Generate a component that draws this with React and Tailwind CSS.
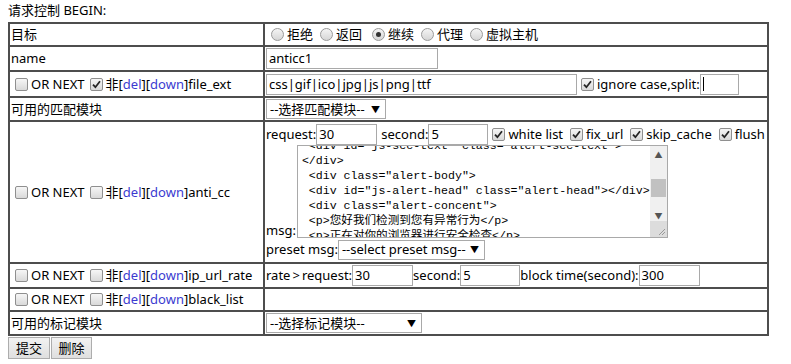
import React from "react";

const Check = ({ checked }) => (
  <span className="inline-flex items-center justify-center w-[13px] h-[13px] shrink-0 border border-[#8f8f8f] rounded-[2px] bg-linear-to-b from-[#f6f6f6] to-[#d9d9d9] ml-[4px] mr-[3px]">
    {checked && (
      <svg width="9" height="9" viewBox="0 0 9 9">
        <path d="M1 4.6 L3.4 7.2 L8 1.2" fill="none" stroke="#262626" strokeWidth="1.8" />
      </svg>
    )}
  </span>
);

const Radio = ({ checked }) => (
  <span className="inline-flex items-center justify-center w-[13px] h-[13px] shrink-0 border border-[#9a9a9a] rounded-full bg-linear-to-b from-[#f4f4f4] to-[#d6d6d6] ml-[5px] mr-[3px]">
    {checked && <span className="w-[5px] h-[5px] rounded-full bg-[#333]" />}
  </span>
);

const Input = ({ w, value, caret }) => (
  <span className={`inline-flex items-center h-[21px] border border-[#a9a9a9] bg-white px-[2px] shrink-0 ${w}`}>
    {value}
    {caret && <span className="w-px h-[14px] bg-black" />}
  </span>
);

const Select = ({ w, label }) => (
  <span className={`inline-flex items-center justify-between h-[20px] border border-[#a9a9a9] bg-white pl-[3px] pr-[5px] shrink-0 ${w}`}>
    <span>{label}</span>
    <span className="text-[9px]">▼</span>
  </span>
);

const Rule = ({ name, checked }) => (
  <div className="flex items-center whitespace-nowrap">
    <Check />
    <span className="mr-[1px]">OR NEXT</span>
    <Check checked={checked} />
    <span>非[<span className="text-[#3b3bd0]">del</span>][<span className="text-[#3b3bd0]">down</span>]{name}</span>
  </div>
);

const Cell = ({ h, children, className = "" }) => (
  <td className={`border border-[#4d4d4d] p-[1px] align-middle ${h} ${className}`}>{children}</td>
);

const msgLines = [
  ' <div id="js-sec-text" class="alert-sec-text">',
  "</div>",
  ' <div class="alert-body">',
  ' <div id="js-alert-head" class="alert-head"></div>',
  ' <div class="alert-concent">',
  " <p>您好我们检测到您有异常行为</p>",
  " <p>正在对你的浏览器进行安全检查</p>",
];

export default function App() {
  return (
    <div className="w-[791px] h-[364px] bg-white text-black text-[13px] leading-[17px] font-['Noto_Sans','Noto_Sans_CJK_SC',sans-serif] overflow-hidden">
      <div className="pl-2 pt-[2px] h-[22px]">请求控制 BEGIN:</div>
      <table className="ml-2 w-[761px] table-fixed border-separate border-spacing-0 border border-[#4d4d4d]">
        <tbody>
          <tr>
            <Cell h="h-[23px]" className="w-[255px]">目标</Cell>
            <Cell h="h-[23px]">
              <div className="flex items-center whitespace-nowrap">
                <Radio />
                <span className="mr-[2px]">拒绝</span>
                <Radio />
                <span className="mr-[5px]">返回</span>
                <Radio checked />
                <span className="mr-[2px]">继续</span>
                <Radio />
                <span className="mr-[2px]">代理</span>
                <Radio />
                <span>虚拟主机</span>
              </div>
            </Cell>
          </tr>
          <tr>
            <Cell h="h-[25px]">name</Cell>
            <Cell h="h-[25px]">
              <div className="flex items-center">
                <Input w="w-[172px]" value="anticc1" />
              </div>
            </Cell>
          </tr>
          <tr>
            <Cell h="h-[26px]">
              <Rule name="file_ext" checked />
            </Cell>
            <Cell h="h-[26px]">
              <div className="flex items-center whitespace-nowrap">
                <Input w="w-[311px]" value="css|gif|ico|jpg|js|png|ttf" />
                <Check checked />
                <span>ignore case,split:</span>
                <Input w="w-[39px]" caret />
              </div>
            </Cell>
          </tr>
          <tr>
            <Cell h="h-[23px]">可用的匹配模块</Cell>
            <Cell h="h-[23px]">
              <div className="flex items-center">
                <Select w="w-[120px]" label="--选择匹配模块--" />
              </div>
            </Cell>
          </tr>
          <tr>
            <Cell h="h-[142px]">
              <Rule name="anti_cc" />
            </Cell>
            <Cell h="h-[142px]">
              <div className="flex flex-col">
                <div className="flex items-center whitespace-nowrap h-[21px]">
                  <span>request:</span>
                  <Input w="w-[61px]" value="30" />
                  <span className="ml-[4px]">second:</span>
                  <Input w="w-[60px]" value="5" />
                  <Check checked />
                  <span className="mr-[3px]">white list</span>
                  <Check checked />
                  <span className="mr-[3px]">fix_url</span>
                  <Check checked />
                  <span className="mr-[3px]">skip_cache</span>
                  <Check checked />
                  <span>flush</span>
                </div>
                <div className="flex items-end">
                  <span className="leading-[15px]">msg:</span>
                  <div className="flex w-[371px] h-[93px] border border-[#a9a9a9] bg-white ml-[1px]">
                    <div className="flex-1 overflow-hidden pl-[4px] font-['Liberation_Mono','Noto_Sans_CJK_SC',monospace] text-[11.6px] leading-[15px] whitespace-pre">
                      <div className="-mt-[8px]">
                        {msgLines.map((l, i) => (
                          <div key={i}>{l}</div>
                        ))}
                      </div>
                    </div>
                    <div className="w-[17px] flex flex-col bg-[#f0f0f0] text-[#555] text-[8px] leading-none">
                      <div className="h-[17px] flex items-center justify-center">▲</div>
                      <div className="h-[48px] flex flex-col">
                        <div className="h-[16px]" />
                        <div className="mx-[1px] h-[18px] bg-[#c1c1c1]" />
                      </div>
                      <div className="h-[10px] flex items-center justify-center">▼</div>
                      <div className="flex-1 bg-[#dcdcdc] flex items-end justify-end p-[1px]">
                        <svg width="8" height="8" viewBox="0 0 8 8">
                          <path d="M7 1 L1 7 M7 4 L4 7" stroke="#999" strokeWidth="1" />
                        </svg>
                      </div>
                    </div>
                  </div>
                </div>
                <div className="flex items-center whitespace-nowrap h-[21px] mt-[1px]">
                  <span>preset msg:</span>
                  <Select w="w-[147px]" label="--select preset msg--" />
                </div>
              </div>
            </Cell>
          </tr>
          <tr>
            <Cell h="h-[24px]">
              <Rule name="ip_url_rate" />
            </Cell>
            <Cell h="h-[24px]">
              <div className="flex items-center whitespace-nowrap">
                <span>rate<span className="mx-[2px]">&gt;</span>request:</span>
                <Input w="w-[61px]" value="30" />
                <span>second:</span>
                <Input w="w-[60px]" value="5" />
                <span>block time(second):</span>
                <Input w="w-[61px]" value="300" />
              </div>
            </Cell>
          </tr>
          <tr>
            <Cell h="h-[23px]">
              <Rule name="black_list" />
            </Cell>
            <Cell h="h-[23px]" />
          </tr>
          <tr>
            <Cell h="h-[24px]">可用的标记模块</Cell>
            <Cell h="h-[24px]">
              <div className="flex items-center">
                <Select w="w-[156px]" label="--选择标记模块--" />
              </div>
            </Cell>
          </tr>
        </tbody>
      </table>
      <div className="flex pl-2 pt-[1px] gap-[1px]">
        <button className="h-[22px] w-[42px] border border-[#adadad] bg-linear-to-b from-[#f2f2f2] to-[#dfdfdf]">提交</button>
        <button className="h-[22px] w-[41px] border border-[#adadad] bg-linear-to-b from-[#f2f2f2] to-[#dfdfdf]">删除</button>
      </div>
    </div>
  );
}
